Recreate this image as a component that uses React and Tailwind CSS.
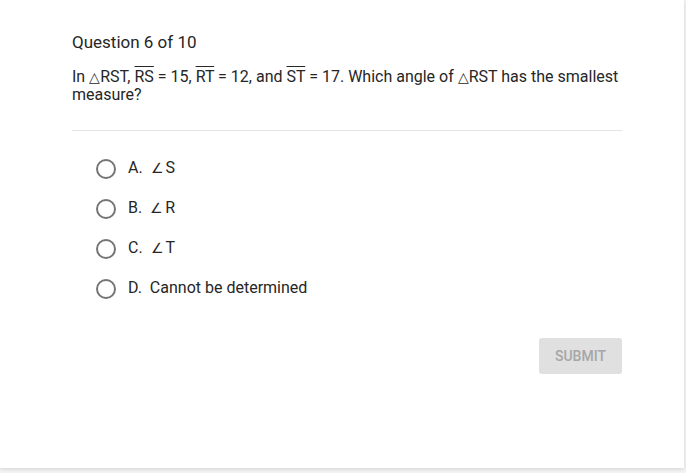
import React, { useState } from "react";

const options = [
    { key: "A", label: <><span className="text-[14px] leading-[0] mr-[2px]">∠</span>S</> },
    { key: "B", label: <><span className="text-[14px] leading-[0] mr-[2px]">∠</span>R</> },
    { key: "C", label: <><span className="text-[14px] leading-[0] mr-[2px]">∠</span>T</> },
    { key: "D", label: "Cannot be determined" },
];

function Tri() {
    return <span className="text-[14px] leading-[0]">△</span>;
}

export default function App() {
    const [picked, setPicked] = useState(null);

    return (
        <div className="w-[686px] h-[473px] bg-[#f4f4f4] font-['Roboto',sans-serif] text-[#333]">
            <div className="w-[684px] h-[468px] bg-white shadow-[0_1px_4px_rgba(0,0,0,0.15)]">
                <div className="ml-[72px] w-[550px] pt-[32px]">
                    <h2 className="text-[17px] leading-[21px] text-[#262626]">Question 6 of 10</h2>

                    <p className="mt-[15px] text-[16px] leading-[18px] text-[#262626]">
                        In <Tri />RST, <span className="overline">RS</span> = 15,{" "}
                        <span className="overline">RT</span> = 12, and <span className="overline">ST</span> = 17. Which angle of{" "}
                        <Tri />RST has the smallest measure?
                    </p>

                    <div className="mt-[26px] border-t border-[#e4e4e4]" />

                    <div className="mt-[28px] ml-[24px] flex flex-col gap-[20px]">
                        {options.map((o) => (
                            <label key={o.key} className="flex items-center h-[20px] cursor-pointer text-[16px]" onClick={() => setPicked(o.key)}>
                                <span className="w-[20px] h-[20px] rounded-full border-2 border-[#757575] flex items-center justify-center">
                                    {picked === o.key && <span className="w-[10px] h-[10px] rounded-full bg-[#757575]" />}
                                </span>
                                <span className="ml-[12px] -mt-[2px] text-[#262626] whitespace-pre">
                                    {o.key}.  {o.label}
                                </span>
                            </label>
                        ))}
                    </div>

                    <div className="mt-[39px] flex justify-end">
                        <button className="w-[83px] h-[36px] rounded-[3px] bg-[#e0e0e0] text-[#a6a6a6] text-[14px] font-medium">
                            SUBMIT
                        </button>
                    </div>
                </div>
            </div>
        </div>
    );
}
